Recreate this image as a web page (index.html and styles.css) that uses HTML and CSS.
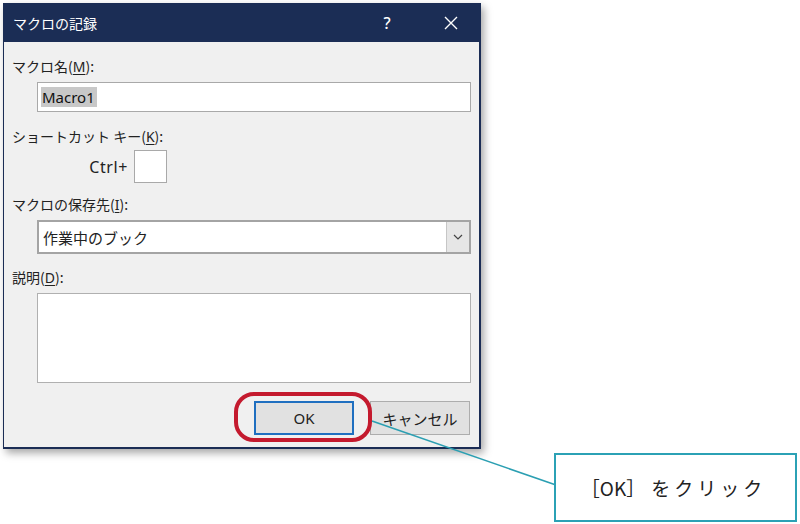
FILE: index.html
```html
<!DOCTYPE html>
<html lang="ja">
<head>
<meta charset="utf-8">
<title>マクロの記録</title>
<link rel="stylesheet" href="styles.css">
</head>
<body>
<div class="page">
  <div class="dialog">
    <div class="titlebar">
      <span class="title">マクロの記録</span>
      <span class="help">?</span>
      <span class="close">
        <svg width="14" height="14" viewBox="0 0 14 14"><path d="M1 1 L13 13 M13 1 L1 13" stroke="#ffffff" stroke-width="1.4" fill="none"/></svg>
      </span>
    </div>
    <div class="content">
      <div class="label">マクロ名(<u>M</u>):</div>
      <div class="field text"><span class="sel">Macro1</span></div>
      <div class="label gap-lg">ショートカット キー(<u>K</u>):</div>
      <div class="ctrl"><span class="ctrl-label">Ctrl+</span><span class="keybox"></span></div>
      <div class="label gap-md">マクロの保存先(<u>I</u>):</div>
      <div class="field select">
        <span class="val">作業中のブック</span>
        <span class="arrow"><svg width="10" height="6" viewBox="0 0 10 6"><path d="M1 1 L5 5 L9 1" stroke="#444" stroke-width="1.2" fill="none"/></svg></span>
      </div>
      <div class="label gap-md2">説明(<u>D</u>):</div>
      <div class="field area"></div>
      <div class="buttons">
        <span class="okwrap"><span class="btn ok">OK</span><span class="ring"></span></span>
        <span class="btn cancel">キャンセル</span>
      </div>
    </div>
  </div>
  <svg class="leader" width="800" height="524" viewBox="0 0 800 524"><line x1="372" y1="421" x2="556" y2="485" stroke="#2b9fb2" stroke-width="1.6"/></svg>
  <div class="callout"><span class="bracket">［OK］</span><span class="action">をクリック</span></div>
</div>
</body>
</html>
```
FILE: styles.css
```css
html, body {
  margin: 0;
  padding: 0;
  background: #ffffff;
}
.page {
  position: relative;
  width: 800px;
  height: 524px;
  padding: 3px 0 0 3px;
  box-sizing: border-box;
  font-family: "Noto Sans", "Noto Sans CJK JP", sans-serif;
  color: #222222;
  overflow: hidden;
}
.dialog {
  width: 478px;
  height: 446px;
  box-sizing: border-box;
  background: #f0f0f0;
  border: 1px solid #1b2d55;
  border-right-width: 2px;
  border-bottom-width: 2px;
  box-shadow: 3px 4px 8px rgba(0, 0, 0, 0.35);
}
.titlebar {
  height: 39px;
  margin: -1px -1px 0 -1px;
  background: #1b2d55;
  color: #ffffff;
  display: flex;
  align-items: center;
  padding: 0 6px 0 10px;
}
.title {
  flex: 1;
  font-family: "Noto Sans CJK JP", sans-serif;
  font-size: 14px;
}
.help {
  width: 40px;
  text-align: center;
  font-size: 16px;
  font-weight: 500;
  margin-right: 21px;
}
.close {
  width: 46px;
  display: flex;
  justify-content: center;
  align-items: center;
}
.content {
  padding: 14px 8px 0 8px;
  display: flex;
  flex-direction: column;
}
.label {
  font-family: "Noto Sans CJK JP", sans-serif;
  font-size: 14px;
  line-height: 20px;
  height: 20px;
}
.label u {
  font-family: "Noto Sans", sans-serif;
  text-underline-offset: 2px;
}
.gap-lg { margin-top: 14px; }
.gap-md { margin-top: 11px; }
.gap-md2 { margin-top: 13px; }
.field {
  margin-left: 25px;
  margin-top: 6px;
  background: #ffffff;
  box-sizing: border-box;
}
.text {
  height: 30px;
  border: 1px solid #a9a9a9;
  display: flex;
  align-items: center;
  padding-left: 3px;
}
.sel {
  background: #c8c8c8;
  font-size: 15px;
  line-height: 20px;
  padding: 0 2px 0 1px;
  color: #111111;
}
.ctrl {
  display: flex;
  align-items: center;
  margin-top: 4px;
  height: 33px;
}
.ctrl-label {
  width: 116px;
  text-align: right;
  padding-right: 6px;
  font-size: 16px;
  letter-spacing: 0.6px;
}
.keybox {
  width: 33px;
  height: 33px;
  box-sizing: border-box;
  background: #ffffff;
  border: 1px solid #a9a9a9;
}
.select {
  height: 34px;
  border: 2px solid #a4a4a4;
  display: flex;
  align-items: center;
}
.val {
  flex: 1;
  padding-left: 4px;
  font-family: "Noto Sans CJK JP", sans-serif;
  font-size: 15px;
}
.arrow {
  width: 22px;
  height: 30px;
  background: #e6e6e6;
  border-left: 1px solid #c6c6c6;
  display: flex;
  align-items: center;
  justify-content: center;
}
.area {
  height: 90px;
  border: 1px solid #b0b0b0;
}
.buttons {
  margin-top: 18px;
  display: flex;
  justify-content: flex-end;
  gap: 16px;
  padding-right: 1px;
}
.okwrap {
  position: relative;
  display: flex;
}
.btn {
  width: 100px;
  height: 34px;
  box-sizing: border-box;
  background: #e1e1e1;
  border: 1px solid #adadad;
  display: flex;
  align-items: center;
  justify-content: center;
  font-family: "Noto Sans CJK JP", sans-serif;
  font-size: 15px;
}
.ok {
  border: 2px solid #1f6fc0;
  font-family: "Noto Sans", sans-serif;
}
.ring {
  position: absolute;
  left: -20px;
  right: -18px;
  top: -9px;
  bottom: -7px;
  border: 4px solid #c41a2e;
  border-radius: 20px;
}
.leader {
  position: absolute;
  left: 0;
  top: 0;
}
.callout {
  position: absolute;
  left: 554px;
  top: 453px;
  width: 243px;
  height: 69px;
  box-sizing: border-box;
  border: 2px solid #2ba1b5;
  background: #ffffff;
  display: flex;
  align-items: center;
  justify-content: center;
  padding-right: 4px;
  font-family: "Noto Sans CJK JP", sans-serif;
  font-size: 19px;
  color: #222222;
}
.bracket {
  margin-right: 6px;
}
.action {
  letter-spacing: 4px;
}
```
